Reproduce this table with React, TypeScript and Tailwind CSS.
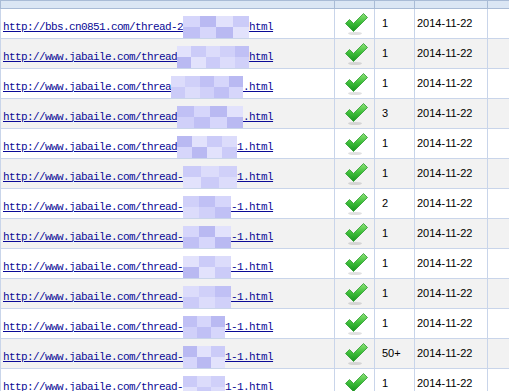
import React from "react";

const rows = [
  { p: "http://bbs.cn0851.com/thread-2", s: "html", n: "1" },
  { p: "http://www.jabaile.com/thread", s: "html", n: "1" },
  { p: "http://www.jabaile.com/threa", s: ".html", n: "1" },
  { p: "http://www.jabaile.com/thread", s: ".html", n: "3" },
  { p: "http://www.jabaile.com/thread", s: "1.html", n: "1" },
  { p: "http://www.jabaile.com/thread-", s: "1.html", n: "1" },
  { p: "http://www.jabaile.com/thread-", s: "-1.html", n: "2" },
  { p: "http://www.jabaile.com/thread-", s: "-1.html", n: "1" },
  { p: "http://www.jabaile.com/thread-", s: "-1.html", n: "1" },
  { p: "http://www.jabaile.com/thread-", s: "-1.html", n: "1" },
  { p: "http://www.jabaile.com/thread-", s: "1-1.html", n: "1" },
  { p: "http://www.jabaile.com/thread-", s: "1-1.html", n: "50+" },
  { p: "http://www.jabaile.com/thread-", s: "1-1.html", n: "1" },
];

const palette = ["#d6d6fb", "#cbcbf8", "#c0c0f5", "#e2e2fc", "#d0d0f9", "#b9b9f2", "#dcdcfb"];

function Mosaic({ width, seed }: { width: number; seed: number }) {
  const cells = Math.max(1, Math.round(width / 16));
  const w = width / cells;
  return (
    <span className="inline-flex flex-col h-[22px] align-middle -my-[4px]" style={{ width }}>
      {[0, 1].map((r) => (
        <span key={r} className="flex flex-1">
          {Array.from({ length: cells }).map((_, i) => (
            <span
              key={i}
              className="h-full"
              style={{ width: w, background: palette[(seed * 3 + i * 5 + r * 2) % palette.length] }}
            />
          ))}
        </span>
      ))}
    </span>
  );
}

function Check() {
  return (
    <svg width="26" height="24" viewBox="0 0 26 24">
      <defs>
        <linearGradient id="cg" x1="0" y1="0" x2="0" y2="1">
          <stop offset="0" stopColor="#8ee27a" />
          <stop offset="0.5" stopColor="#3fbf3a" />
          <stop offset="1" stopColor="#17921f" />
        </linearGradient>
      </defs>
      <ellipse cx="11" cy="21.5" rx="7" ry="1.6" fill="#000" opacity="0.12" />
      <path
        d="M1.5 11.5 L5.5 7.5 L9.5 11.5 L19.5 1.5 L23.5 5.5 L9.5 19.5 Z"
        fill="url(#cg)"
        stroke="#2a9a2c"
        strokeWidth="0.8"
        strokeLinejoin="round"
      />
    </svg>
  );
}

export default function App() {
  return (
    <div className="w-[509px] h-[391px] overflow-hidden bg-white">
      <table className="border-collapse table-fixed w-[540px]">
        <colgroup>
          <col className="w-[334px]" />
          <col className="w-[40px]" />
          <col className="w-[40px]" />
          <col className="w-[73px]" />
          <col />
        </colgroup>
        <thead>
          <tr className="h-[8px] bg-[#dbe6f4]">
            {[0, 1, 2, 3, 4].map((i) => (
              <th key={i} className="border border-[#a9bbd6] p-0 h-[8px]" />
            ))}
          </tr>
        </thead>
        <tbody>
          {rows.map((r, idx) => {
            const mw = 270 - 6 * (r.p.length + r.s.length);
            return (
              <tr key={idx} className={idx % 2 === 1 ? "bg-[#f2f2f2] h-[30px]" : "bg-white h-[30px]"}>
                <td className="border border-[#c9d5ea] p-0 pl-[2px] whitespace-nowrap overflow-hidden">
                  <span
                    className="text-[11px] tracking-[-0.6px] text-[#0a0a96] leading-[14px]"
                    style={{ fontFamily: '"Liberation Mono", monospace' }}
                  >
                    <span className="underline">{r.p}</span>
                    <Mosaic width={mw} seed={idx} />
                    <span className="underline">{r.s}</span>
                  </span>
                </td>
                <td className="border border-[#c9d5ea] p-0">
                  <div className="flex justify-center pl-[5px] pt-[1px]">
                    <Check />
                  </div>
                </td>
                <td
                  className="border border-[#c9d5ea] p-0 pl-[7px] text-[11px] text-black"
                  style={{ fontFamily: '"Liberation Sans", sans-serif' }}
                >
                  {r.n}
                </td>
                <td
                  className="border border-[#c9d5ea] p-0 pl-[2px] text-[11px] text-black"
                  style={{ fontFamily: '"Liberation Sans", sans-serif' }}
                >
                  2014-11-22
                </td>
                <td className="border border-[#c9d5ea] p-0" />
              </tr>
            );
          })}
        </tbody>
      </table>
    </div>
  );
}
